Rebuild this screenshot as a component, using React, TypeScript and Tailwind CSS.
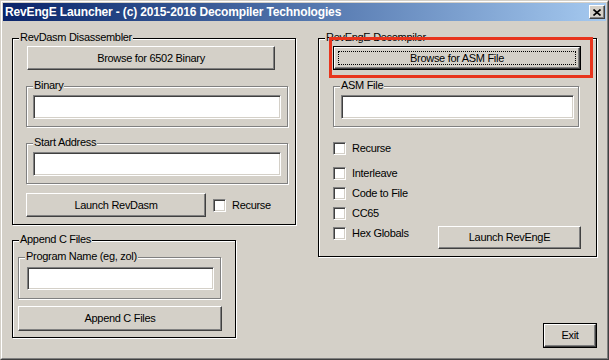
import React from 'react';

const raised =
  'border border-t-white border-l-white border-r-[#404040] border-b-[#404040] shadow-[inset_-1px_-1px_0_#808080]';
const sunken =
  'bg-white border border-t-[#808080] border-l-[#808080] border-r-white border-b-white shadow-[inset_1px_1px_0_#404040,inset_-1px_-1px_0_#d4d0c8]';

const Button = ({
  className = '',
  children,
  isDefault = false,
  focused = false,
}: {
  className?: string;
  children: React.ReactNode;
  isDefault?: boolean;
  focused?: boolean;
}) => {
  if (isDefault) {
    return (
      <div className={`shrink-0 border border-black ${className}`}>
        <div className={`relative flex h-full w-full items-center justify-center ${raised}`}>
          {focused && <div className="absolute inset-[3px] border border-dotted border-black" />}
          <span className="relative">{children}</span>
        </div>
      </div>
    );
  }
  return (
    <div className={`shrink-0 flex items-center justify-center ${raised} ${className}`}>{children}</div>
  );
};

const Group = ({
  label,
  dark = false,
  className = '',
  children,
}: {
  label: string;
  dark?: boolean;
  className?: string;
  children: React.ReactNode;
}) => (
  <div
    className={`relative shrink-0 flex flex-col border shadow-[1px_1px_0_white,inset_1px_1px_0_white] ${
      dark ? 'border-black' : 'border-[#808080]'
    } ${className}`}
  >
    <span className="absolute left-[6px] top-[-8px] bg-[#d4d0c8] px-[1px] leading-[13px]">{label}</span>
    {children}
  </div>
);

const Check = ({ label, className = '' }: { label: string; className?: string }) => (
  <div className={`flex items-center h-[13px] ${className}`}>
    <div className={`w-[13px] h-[13px] shrink-0 ${sunken}`} />
    <span className="ml-[6px] leading-[13px]">{label}</span>
  </div>
);

export default function App() {
  return (
    <div className="w-[609px] h-[360px] bg-[#d4d0c8] font-['Liberation_Sans',Arial,sans-serif] text-[11px] tracking-[-0.3px] text-black">
      <div className="relative w-full h-full border border-t-[#d4d0c8] border-l-[#d4d0c8] border-r-[#404040] border-b-[#404040]">
        <div className="w-full h-full border border-t-white border-l-white border-r-[#808080] border-b-[#808080] p-[1px] flex flex-col">
          {/* title bar */}
          <div className="h-[18px] shrink-0 flex items-center bg-gradient-to-r from-[#0a246a] to-[#a6caf0]">
            <span className="ml-[2px] text-white font-bold text-[12px] tracking-[-0.15px] leading-[18px]">
              RevEngE Launcher - (c) 2015-2016 Decompiler Technologies
            </span>
            <div className={`ml-auto mr-[1px] w-[16px] h-[14px] bg-[#d4d0c8] flex items-center justify-center ${raised}`}>
              <svg width="8" height="7" viewBox="0 0 8 7">
                <path d="M0.5 0.5 L7.5 6.5 M7.5 0.5 L0.5 6.5" stroke="black" strokeWidth="1.6" />
              </svg>
            </div>
          </div>

          {/* client */}
          <div className="flex">
            {/* left column */}
            <div className="ml-[9px] mt-[17px] flex flex-col">
              <Group label="RevDasm Disassembler" dark className="w-[284px] h-[187px]">
                <Button className="ml-[14px] mt-[7px] w-[248px] h-[24px]">Browse for 6502 Binary</Button>
                <Group label="Binary" className="ml-[13px] mt-[16px] w-[262px] h-[41px]">
                  <div className={`ml-[6px] mt-[8px] w-[248px] h-[24px] ${sunken}`} />
                </Group>
                <Group label="Start Address" className="ml-[13px] mt-[16px] w-[262px] h-[41px]">
                  <div className={`ml-[6px] mt-[8px] w-[248px] h-[24px] ${sunken}`} />
                </Group>
                <div className="ml-[13px] mt-[9px] flex items-center">
                  <Button className="w-[180px] h-[24px]">Launch RevDasm</Button>
                  <Check label="Recurse" className="ml-[7px]" />
                </div>
              </Group>

              <Group label="Append C Files" dark className="mt-[15px] w-[224px] h-[98px]">
                <Group label="Program Name (eg, zol)" className="ml-[5px] mt-[16px] w-[203px] h-[42px]">
                  <div className={`ml-[8px] mt-[9px] w-[187px] h-[23px] ${sunken}`} />
                </Group>
                <Button className="ml-[5px] mt-[7px] w-[204px] h-[25px]">Append C Files</Button>
              </Group>
            </div>

            {/* right column */}
            <div className="ml-[22px] mt-[17px] flex flex-col">
              <Group label="RevEngE Decompiler" dark className="w-[279px] h-[219px]">
                <Button isDefault focused className="ml-[14px] mt-[7px] w-[248px] h-[24px]">
                  Browse for ASM File
                </Button>
                <Group label="ASM File" className="ml-[14px] mt-[16px] w-[246px] h-[41px]">
                  <div className={`ml-[7px] mt-[8px] w-[233px] h-[24px] ${sunken}`} />
                </Group>
                <div className="ml-[14px] flex flex-col">
                  <Check label="Recurse" className="mt-[15px]" />
                  <Check label="Interleave" className="mt-[12px]" />
                  <Check label="Code to File" className="mt-[7px]" />
                  <Check label="CC65" className="mt-[7px]" />
                  <div className="mt-[6px] w-[248px] flex items-start justify-between">
                    <Check label="Hex Globals" className="mt-[1px]" />
                    <Button className="w-[143px] h-[23px]">Launch RevEngE</Button>
                  </div>
                </div>
              </Group>
              <Button isDefault className="self-end mt-[66px] w-[54px] h-[25px]">
                Exit
              </Button>
            </div>
          </div>
        </div>

        {/* annotation highlight */}
        <div className="absolute left-[328px] top-[36px] w-[264px] h-[41px] border-[3px] border-[#e8341c]" />
      </div>
    </div>
  );
}
